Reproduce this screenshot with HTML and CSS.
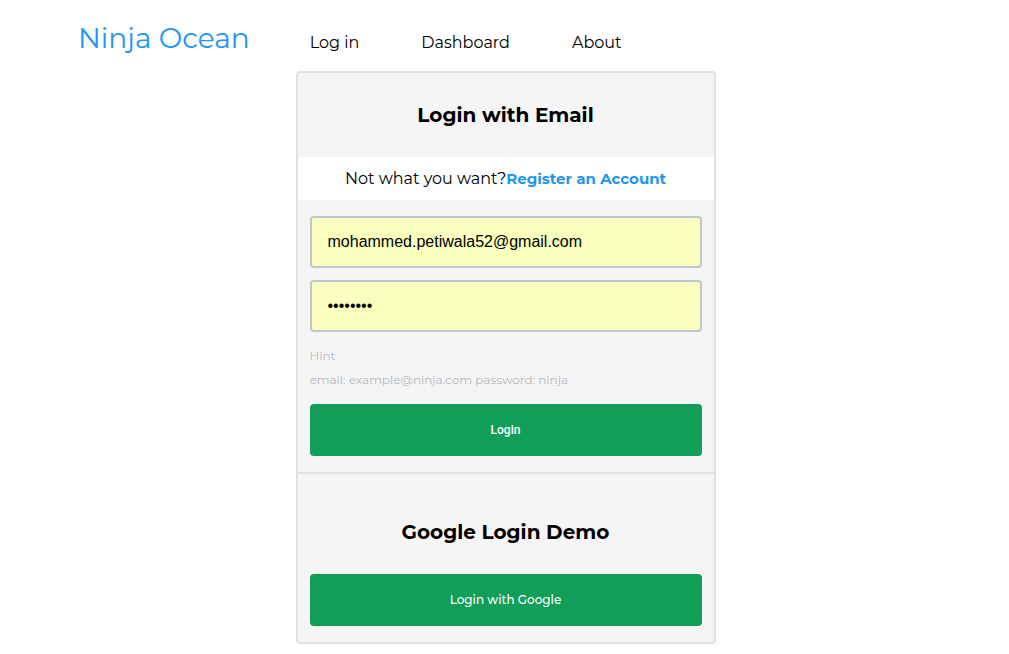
FILE: index.html
```html
<!DOCTYPE html>
<html lang="en">
<head>
<meta charset="utf-8">
<title>Ninja Ocean</title>
<link rel="stylesheet" href="styles.css">
</head>
<body>
<header class="site-header">
  <a class="brand" href="#">Ninja Ocean</a>
  <nav class="site-nav">
    <a href="#">Log in</a>
    <a href="#">Dashboard</a>
    <a href="#">About</a>
  </nav>
</header>
<main class="panel">
  <section class="email-login">
    <h1 class="title">Login with Email</h1>
    <p class="switch">Not what you want?<a href="#">Register an Account</a></p>
    <form class="form">
      <input class="field" type="email" aria-label="Email" value="mohammed.petiwala52@gmail.com">
      <input class="field" type="password" aria-label="Password" value="password">
      <p class="hint">Hint<br>email: example@ninja.com password: ninja</p>
      <button class="button submit" type="button">Login</button>
    </form>
  </section>
  <section class="google-login">
    <h2 class="title">Google Login Demo</h2>
    <button class="button" type="button">Login with Google</button>
  </section>
</main>
</body>
</html>
```
FILE: styles.css
```css
* {
  box-sizing: border-box;
}

body {
  margin: 0;
  padding-left: 2px;
  background: #fff;
  color: #000;
  font: 16px/24px Montserrat, Inter, sans-serif;
}

a {
  color: #2196f3;
  text-decoration: none;
}

.site-header {
  display: flex;
  align-items: center;
  gap: 60px;
  padding: 17px 76px 12px;
}

.brand {
  font-size: 28px;
  line-height: 42px;
}

.site-nav {
  display: flex;
  gap: 62px;
  padding-top: 10px;
}

.site-nav a {
  color: #000;
}

.panel {
  width: 100%;
  max-width: 420px;
  margin: 0 auto;
  border: 2px solid #e1e1e1;
  border-radius: 4px;
  background: #f5f5f5;
}

.title {
  margin: 0;
  padding: 26px 0;
  font-size: 20px;
  line-height: 32px;
  font-weight: 700;
  text-align: center;
}

.switch {
  margin: 0;
  padding: 10px 0 9px;
  background: #fff;
  text-align: center;
}

.switch a {
  font-size: 15px;
  font-weight: 700;
}

.form {
  display: grid;
  gap: 12px;
  padding: 16px 12px;
}

.field {
  width: 100%;
  height: 52px;
  padding: 0 16px;
  border: 2px solid #c2c5cc;
  border-radius: 4px;
  background: #faffbd;
  color: #000;
  font: 16px "Liberation Sans", sans-serif;
}

.hint {
  margin: 0;
  color: #b4b8be;
  font-size: 12px;
}

.button {
  width: 100%;
  height: 52px;
  padding: 0 0 2px;
  border: 0;
  border-radius: 4px;
  background: #119e58;
  color: #fff;
  font: 500 12px Montserrat, Inter, sans-serif;
}

.submit {
  padding: 0;
  font-family: Roboto, sans-serif;
}

.google-login {
  padding: 16px 12px;
  border-top: 2px solid #e1e1e1;
}
```
